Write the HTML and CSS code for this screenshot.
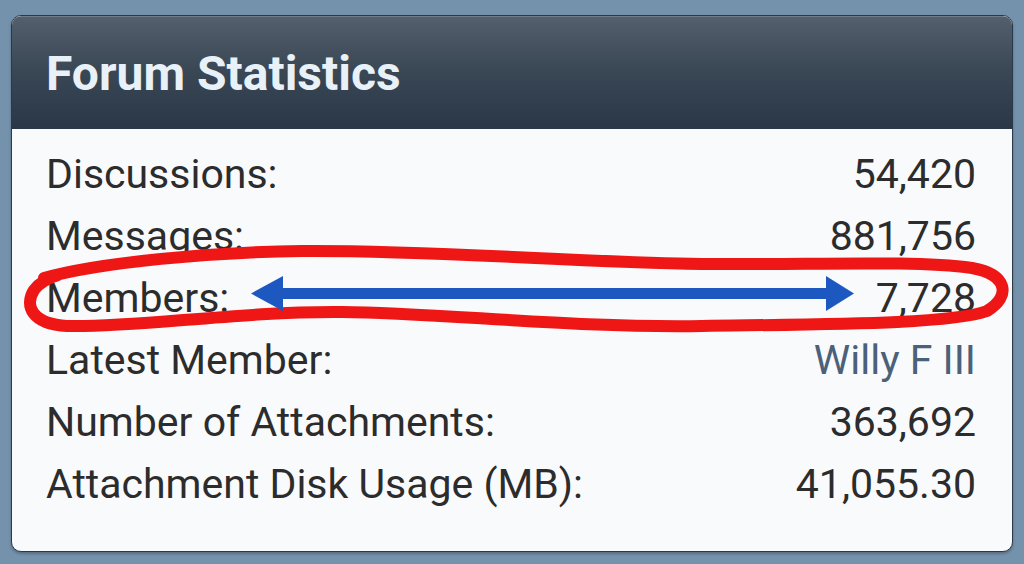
FILE: index.html
```html
<!DOCTYPE html>
<html lang="en">

<head>
    <meta charset="UTF-8">
    <meta name="viewport" content="width=device-width, initial-scale=1.0">
    <title>Forum Statistics</title>
    <link rel="stylesheet" href="styles.css">
</head>

<body>
    <div class="block">
        <h3 class="block-header">Forum Statistics</h3>

        <dl class="stats">
            <div class="pair">
                <dt>Discussions:</dt>
                <dd>54,420</dd>
            </div>
            <div class="pair">
                <dt>Messages:</dt>
                <dd>881,756</dd>
            </div>
            <div class="pair">
                <dt>Members:</dt>
                <dd>7,728</dd>
            </div>
            <div class="pair">
                <dt>Latest Member:</dt>
                <dd><a href="#" class="username">Willy F III</a></dd>
            </div>
            <div class="pair">
                <dt>Number of Attachments:</dt>
                <dd>363,692</dd>
            </div>
            <div class="pair">
                <dt>Attachment Disk Usage (MB):</dt>
                <dd>41,055.30</dd>
            </div>
        </dl>

        <!-- hand drawn markup on top of the screenshot -->
        <svg class="markup" viewBox="0 0 1002 535" aria-hidden="true">
            <path class="loop"
                d="M32 262 C 90 246, 200 236, 290 235 C 420 234, 560 246, 690 248 C 800 249, 900 244, 960 252 C 995 258, 1000 280, 975 295 C 940 308, 820 308, 690 310 C 560 312, 430 297, 330 296 C 230 295, 120 312, 55 310 C 20 308, 12 290, 22 274 C 28 266, 36 262, 46 259" />
            <rect class="arrow" x="266" y="272" width="560" height="11" />
            <polygon class="arrow" points="239,277.5 271,260 271,295" />
            <polygon class="arrow" points="842,277.5 814,260 814,295" />
        </svg>
    </div>
</body>

</html>
```

FILE: styles.css
```css
* {
    margin: 0;
    padding: 0;
    box-sizing: border-box;
}

body {
    font-family: Roboto, "Liberation Sans", sans-serif;
    background-color: #7592ad;
    padding: 15px 11px 14px 11px;
    height: 564px;
    overflow: hidden;
}

/* Block Styling */
.block {
    position: relative;
    background-color: #f9fafc;
    border: 1px solid #2a3949;
    border-radius: 10px;
    overflow: hidden;
    box-shadow: 0 2px 3px rgba(0, 0, 0, 0.25);
}

.block-header {
    height: 113px;
    padding: 0 34px;
    display: flex;
    align-items: center;
    font-size: 48px;
    font-weight: 700;
    color: #e8f0f8;
    background: linear-gradient(to bottom, #535f6b 0%, #3b4856 45%, #293747 100%);
    border-top: 1px solid #6f7d8a;
}

/* Stats list */
.stats {
    padding: 14px 36px 36px 34px;
    font-size: 41px;
    line-height: 62px;
    color: #2c2c2c;
}

.pair {
    display: flex;
    justify-content: space-between;
}

dd {
    text-align: right;
}

.username {
    color: #4a6179;
    text-decoration: none;
}

/* Markup overlay */
.markup {
    position: absolute;
    top: 0;
    left: 0;
    width: 1002px;
    height: 535px;
}

.loop {
    fill: none;
    stroke: #ef1616;
    stroke-width: 12;
    stroke-linecap: round;
    stroke-linejoin: round;
}

.arrow {
    fill: #1d58c1;
}
```
